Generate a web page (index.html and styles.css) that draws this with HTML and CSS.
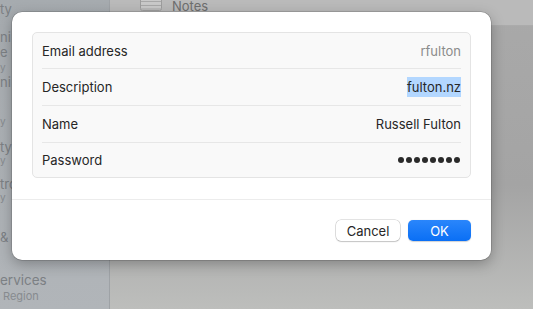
FILE: index.html
```html
<!DOCTYPE html>
<html lang="en">
  <head>
    <title>Account details</title>
    <meta charset="UTF-8" />
    <link rel="stylesheet" href="styles.css">
  </head>
  <body>
    <div class="desktop">
      <aside class="sidebar">
        <span class="side-item s1">ty</span>
        <span class="side-item s2">ni</span>
        <span class="side-item s3">e</span>
        <span class="side-sub s4">y</span>
        <span class="side-item s5">ni</span>
        <span class="side-sub s6">y</span>
        <span class="side-item s7">ty</span>
        <span class="side-sub s8">y</span>
        <span class="side-item s9">tro</span>
        <span class="side-sub s10">y</span>
        <span class="side-item s11">&amp;</span>
        <span class="side-item s12">ervices</span>
        <span class="side-sub s13">Region</span>
      </aside>
      <main class="pane">
        <header class="pane-bar">
          <span class="notes-icon">
            <svg width="22" height="12" viewBox="0 0 22 12">
              <rect x="0.5" y="-4" width="21" height="15.5" rx="2" fill="#c9c9c9" stroke="#9d9d9d" />
              <line x1="1" y1="2.5" x2="21" y2="2.5" stroke="#a8a8a8" />
              <line x1="1" y1="6.5" x2="21" y2="6.5" stroke="#a8a8a8" />
              <line x1="1" y1="10" x2="21" y2="10" stroke="#a8a8a8" />
            </svg>
          </span>
          <span class="notes-label">Notes</span>
        </header>
      </main>
    </div>

    <div class="sheet">
      <div class="fields">
        <div class="field">
          <span class="field-label">Email address</span>
          <span class="field-value muted">rfulton</span>
        </div>
        <div class="field">
          <span class="field-label">Description</span>
          <span class="field-value"><span class="selected">fulton.nz</span></span>
        </div>
        <div class="field">
          <span class="field-label">Name</span>
          <span class="field-value">Russell Fulton</span>
        </div>
        <div class="field">
          <span class="field-label">Password</span>
          <span class="field-value dots" aria-label="password">
            <i></i><i></i><i></i><i></i><i></i><i></i><i></i><i></i>
          </span>
        </div>
      </div>
      <footer class="sheet-buttons">
        <button class="btn">Cancel</button>
        <button class="btn btn-default">OK</button>
      </footer>
    </div>
  </body>
</html>
```

FILE: styles.css
```css
body {
  margin: 0;
  width: 533px;
  height: 309px;
  overflow: hidden;
  font-family: Inter, "Liberation Sans", sans-serif;
  font-size: 13px;
  position: relative;
  background: #a8a8a8;
}

.desktop {
  display: flex;
  height: 309px;
}

.sidebar {
  width: 110px;
  position: relative;
  background: linear-gradient(#a6abaf, #b1b5b9);
  border-right: 1px solid #9ea2a6;
  color: #7c8084;
  box-sizing: border-box;
}

.side-item,
.side-sub {
  position: absolute;
  left: 0;
  white-space: nowrap;
}

.side-item {
  font-size: 13px;
}

.side-sub {
  font-size: 10px;
  color: #878b8f;
}

.s1 { top: 1px; }
.s2 { top: 29px; }
.s3 { top: 44px; }
.s4 { top: 61px; }
.s5 { top: 74px; }
.s6 { top: 115px; }
.s7 { top: 139px; }
.s8 { top: 154px; }
.s9 { top: 176px; }
.s10 { top: 191px; }
.s11 { top: 229px; }
.s12 { top: 272px; font-size: 13.5px; }
.s13 { top: 289px; left: 3px; font-size: 11px; }

.pane {
  flex: 1;
  background: linear-gradient(#a9a9a9, #a4a4a4 60%, #bdbebc);
}

.pane-bar {
  height: 26px;
  box-sizing: border-box;
  display: flex;
  align-items: flex-start;
  gap: 10px;
  padding-left: 30px;
  background: #bababa;
  border-bottom: 1px solid #ababab;
}

.notes-icon {
  display: flex;
  margin-top: -1px;
}

.notes-label {
  color: #6e6e6e;
  font-size: 13px;
  line-height: 12px;
}

/* the sheet sits over the window */
.sheet {
  position: absolute;
  left: 12px;
  top: 12px;
  width: 479px;
  height: 248px;
  background: #fff;
  border-radius: 10px;
  box-shadow: 0 0 0 0.5px rgba(0, 0, 0, 0.25), 0 4px 14px rgba(0, 0, 0, 0.28);
  display: flex;
  flex-direction: column;
}

.fields {
  margin: 20px 20px 0;
  background: #f9f9f9;
  border: 1px solid #e4e4e4;
  border-radius: 5px;
}

.field {
  height: 36px;
  margin: 0 9px;
  display: flex;
  align-items: center;
  justify-content: space-between;
  color: #262626;
}

.field:first-child {
  height: 35px;
}

.field:last-child {
  height: 34px;
}

.field + .field {
  border-top: 1px solid #e7e7e7;
}

.field-value.muted {
  color: #8b8b8b;
}

.selected {
  background: #b3d7ff;
  padding: 2px 0;
}

.dots {
  display: flex;
  gap: 2px;
  margin-right: 1px;
}

.dots i {
  width: 6px;
  height: 6px;
  border-radius: 50%;
  background: #2a2a2a;
}

.sheet-buttons {
  margin-top: 21px;
  border-top: 1px solid #ececec;
  padding: 20px 20px 19px;
  display: flex;
  justify-content: flex-end;
  gap: 8px;
}

.btn {
  height: 21px;
  width: 64px;
  font-family: inherit;
  font-size: 13px;
  color: #262626;
  background: #fff;
  border: 0;
  border-radius: 5px;
  box-shadow: 0 0 0 0.5px rgba(0, 0, 0, 0.22), 0 1px 1.5px rgba(0, 0, 0, 0.14);
  padding: 0;
}

.btn-default {
  width: 63px;
  color: #fff;
  background: linear-gradient(#2a86fb, #0a6ff5);
  box-shadow: 0 0.5px 1px rgba(0, 0, 0, 0.18);
}
```
